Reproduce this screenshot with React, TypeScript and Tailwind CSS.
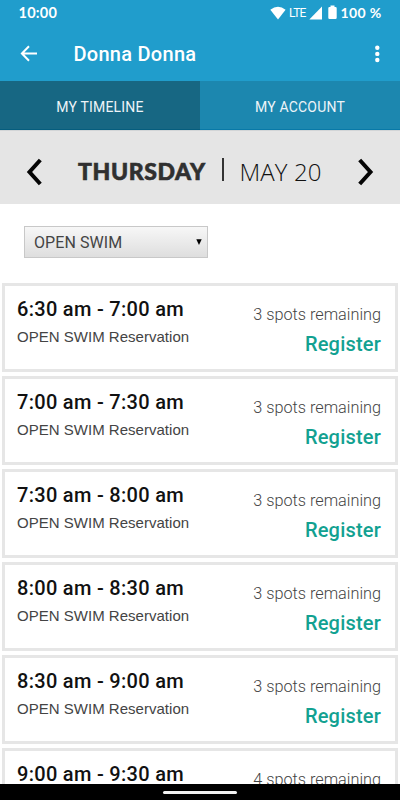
import React from 'react';

const slots = [
  { time: '6:30 am - 7:00 am', spots: 3 },
  { time: '7:00 am - 7:30 am', spots: 3 },
  { time: '7:30 am - 8:00 am', spots: 3 },
  { time: '8:00 am - 8:30 am', spots: 3 },
  { time: '8:30 am - 9:00 am', spots: 3 },
  { time: '9:00 am - 9:30 am', spots: 4 },
];

function StatusBar() {
  return (
    <div className="flex h-[26px] items-center pr-[18px] pl-[18.5px] text-white">
      <span className="font-['Lato',sans-serif] text-[14.5px] leading-[26px] font-bold tracking-[0.25px]">10:00</span>
      <svg className="mt-[-1px] ml-auto" width="16" height="14" viewBox="0 0 16 14" fill="currentColor">
        <path d="M0.3 3.8 Q8 -2.2 15.6 3.8 L8 13.5 Z" />
      </svg>
      <span className="mt-[-1px] ml-[3px] w-[19px] font-['Roboto',sans-serif] text-[12px] tracking-[-0.7px]">LTE</span>
      <svg className="mt-[-1px] ml-[1px]" width="14" height="14" viewBox="0 0 14 14" fill="currentColor">
        <path d="M13 0.5V13.5H0.3Z" />
      </svg>
      <svg className="mt-[-1px] ml-[5px]" width="9" height="15" viewBox="0 0 9 15" fill="currentColor">
        <path d="M2.5 0.5h4v1.5h1q1.2 0 1.2 1.2v9.6q0 1.2-1.2 1.2h-6q-1.2 0-1.2-1.2v-9.6q0-1.2 1.2-1.2h1z" />
      </svg>
      <span className="mt-[-1px] ml-[3.5px] w-[41.5px] font-['Lato',sans-serif] text-[14px] leading-[24px] font-bold tracking-[0.35px] whitespace-nowrap">100 %</span>
    </div>
  );
}

function TitleBar() {
  return (
    <div className="flex h-[55px] items-center pr-[20px] pl-[20px] text-white">
      <svg width="18" height="18" viewBox="0 0 18 18" fill="none" stroke="currentColor" strokeWidth="2" className="mt-px">
        <path d="M9 1.3 1.9 8.5 9 15.7M2 8.5H17" />
      </svg>
      <h1 className="mt-[2px] ml-[35.5px] font-['Roboto',sans-serif] text-[20px] leading-[53px] font-medium tracking-[0.27px]">Donna Donna</h1>
      <svg className="ml-auto" width="6" height="18" viewBox="0 0 6 18" fill="currentColor">
        <circle cx="3.3" cy="2.8" r="2.2" />
        <circle cx="3.3" cy="8.9" r="2.2" />
        <circle cx="3.3" cy="15" r="2.2" />
      </svg>
    </div>
  );
}

function Slot({ time, spots }: { time: string; spots: number }) {
  return (
    <article className="flex h-[89px] shrink-0 justify-between border-[3px] border-[#e6e6e6] bg-white pr-[14px] pl-[12px]">
      <div className="pt-[11px]">
        <div className="text-[20px] leading-[24px] font-medium tracking-[0.3px] text-[#111]">{time}</div>
        <div className="mt-[4px] font-['Liberation_Sans',sans-serif] text-[15px] leading-[24px] tracking-[0.02px] text-[#444]">OPEN SWIM Reservation</div>
      </div>
      <div className="pt-[17px] text-right">
        <div className="text-[16.25px] leading-[24px] font-light text-[#444]">{spots} spots remaining</div>
        <div className="mt-[5px] text-[20px] leading-[24px] font-medium tracking-[0.2px] text-[#12a191]">Register</div>
      </div>
    </article>
  );
}

export default function App() {
  return (
    <div className="flex h-[800px] w-[400px] flex-col overflow-hidden bg-white font-['Roboto',sans-serif]">
      <header className="shrink-0 bg-[#209dcc]">
        <StatusBar />
        <TitleBar />
        <nav className="grid h-[49px] grid-cols-2 text-center text-[14px] leading-[52px] tracking-[0.18px] text-[#eef4f8]">
          <div className="h-[49px] border-b border-[#055d7e] bg-[#176783]">MY TIMELINE</div>
          <div className="h-[49px] border-b border-[#0879a8] bg-[#1c87af]">MY ACCOUNT</div>
        </nav>
      </header>
      <section className="flex h-[74px] shrink-0 items-center border-t border-[#d2d5d7] bg-[#e5e5e5] pt-[9px] pr-[26px] pl-[26px]">
        <svg width="17" height="28" viewBox="0 0 17 28" fill="none" stroke="#050505" strokeWidth="4">
          <path d="M14.3 2 3.5 14 14.3 26" />
        </svg>
        <span className="mt-[-1px] ml-[35px] w-[128px] font-['Lato',sans-serif] text-[23px] font-black tracking-[0.6px] whitespace-nowrap text-[#303030] [-webkit-text-stroke:0.6px_#303030]">THURSDAY</span>
        <span className="mt-[-5px] ml-[16px] h-[23px] w-[2px] bg-[#333]" />
        <span className="mt-[-1px] ml-[15.5px] font-['Open_Sans',sans-serif] text-[24px] font-light tracking-[0.1px] whitespace-nowrap text-[#111]">MAY 20</span>
        <svg className="ml-auto" width="17" height="28" viewBox="0 0 17 28" fill="none" stroke="#050505" strokeWidth="4">
          <path d="M2.7 2 13.5 14 2.7 26" />
        </svg>
      </section>
      <section className="h-[79px] shrink-0 pt-[22px] pl-[24px]">
        <div className="flex h-[32px] w-[184px] items-center justify-between border border-[#c8c8c8] bg-linear-to-b from-[#f7f7f7] to-[#dedede] pr-[5px] pl-[9px]">
          <span className="pt-px text-[16px] leading-[29px] tracking-[0.08px] text-[#444]">OPEN SWIM</span>
          <svg width="6" height="6" viewBox="0 0 6 6" fill="#000">
            <path d="M0.3 0.3H5.7L3 6Z" />
          </svg>
        </div>
      </section>
      <main className="flex min-h-0 flex-1 flex-col gap-[4px] overflow-hidden px-[2px]">
        {slots.map((slot) => (
          <Slot key={slot.time} {...slot} />
        ))}
      </main>
      <footer className="flex h-[16px] shrink-0 justify-center bg-black pt-[7px]">
        <span className="h-[3px] w-[74px] rounded-full bg-[#f2f2f2]" />
      </footer>
    </div>
  );
}
